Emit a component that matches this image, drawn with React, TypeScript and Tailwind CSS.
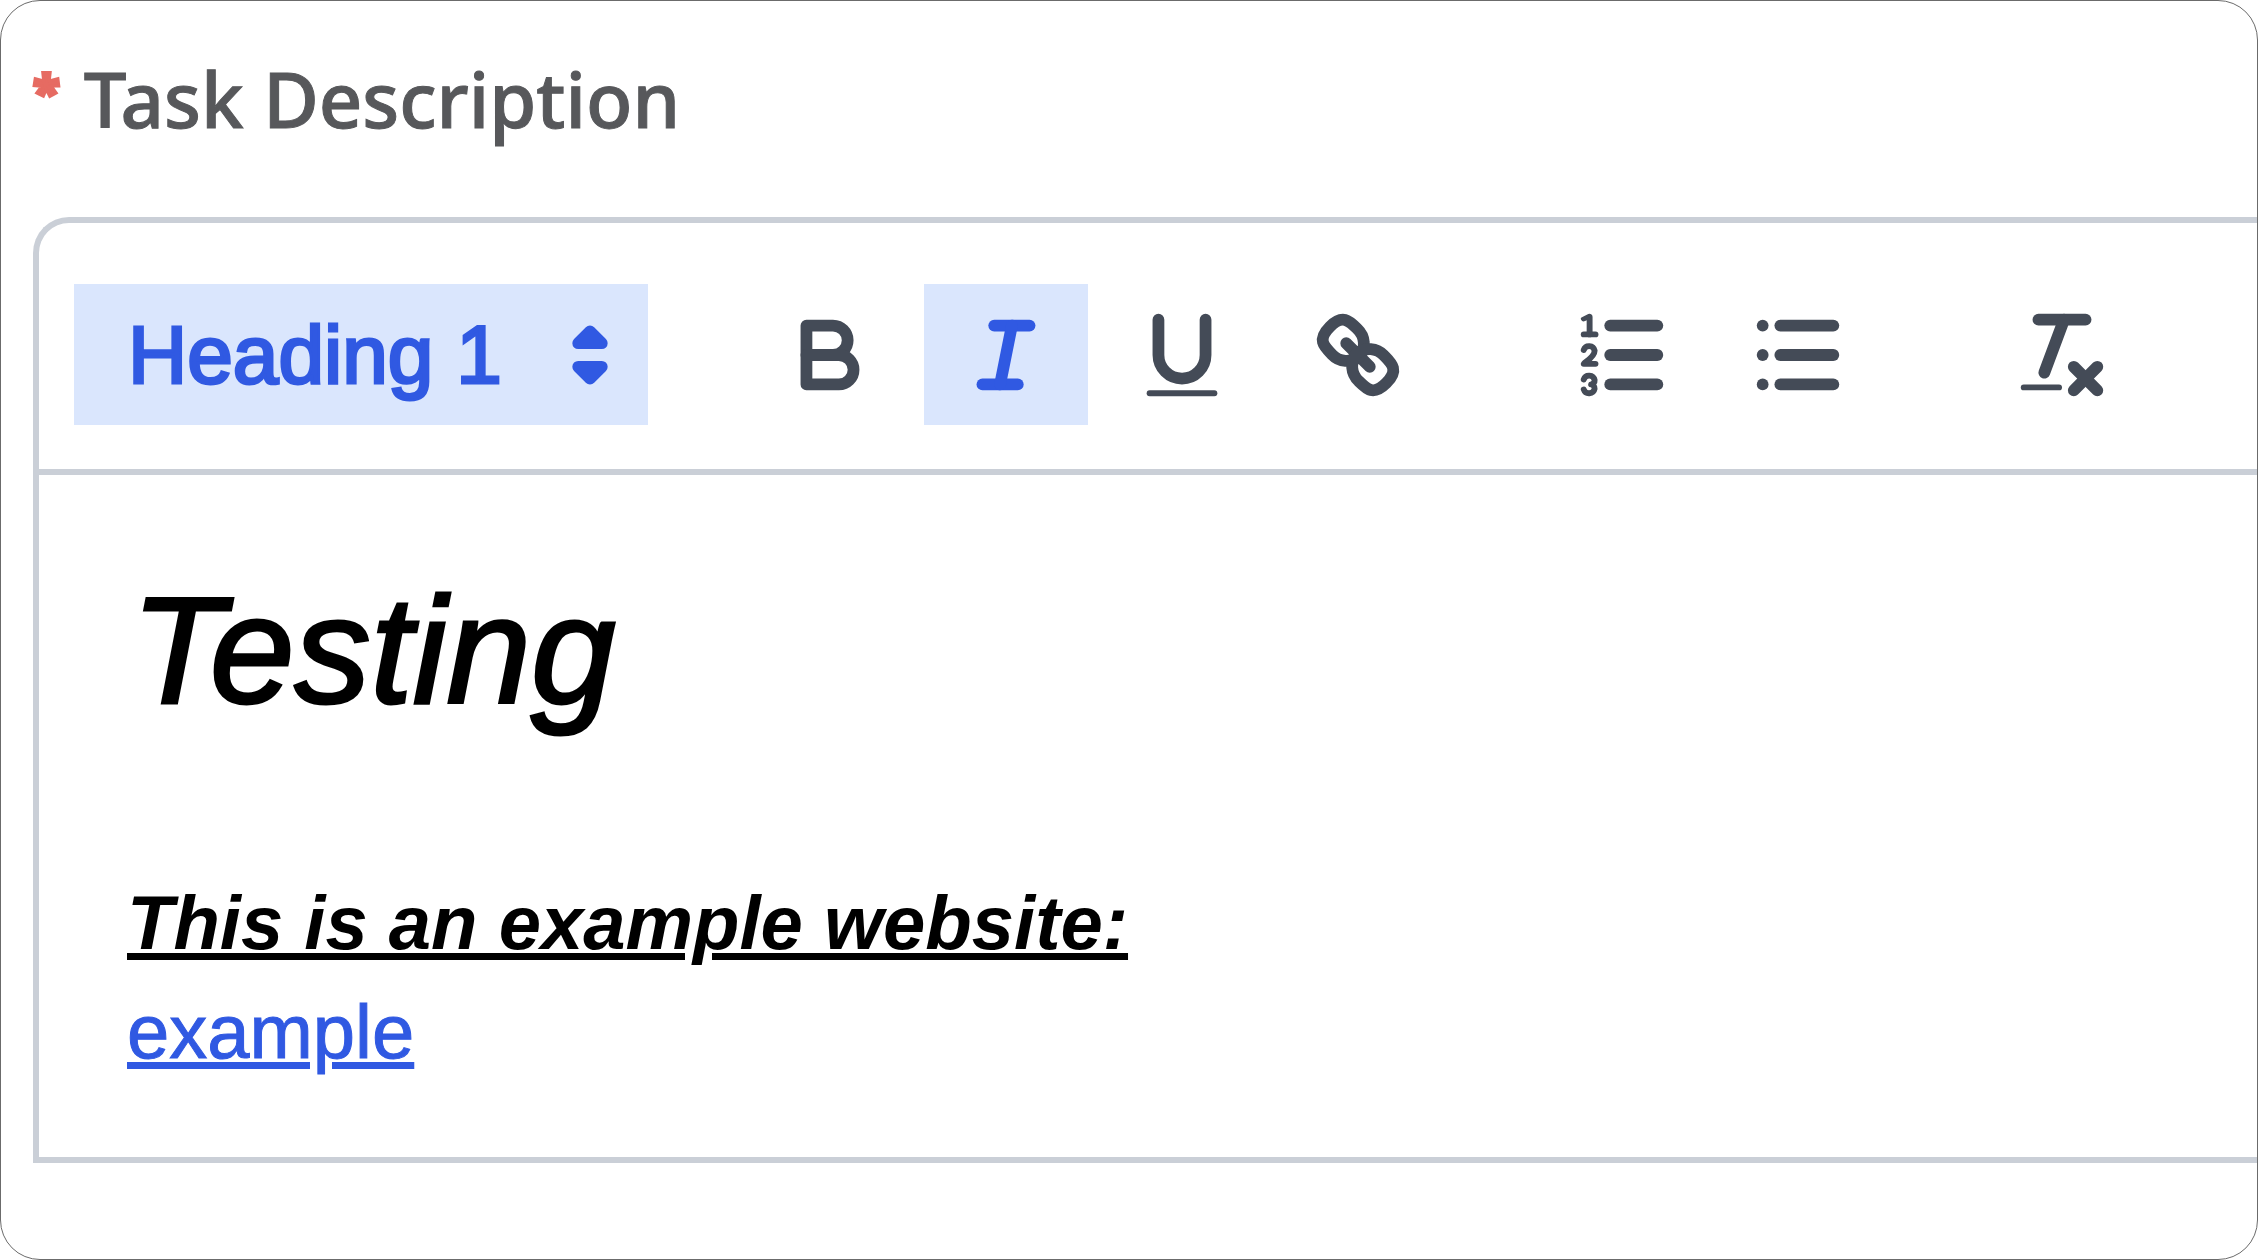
import { useState, type ReactNode } from "react";

function Icon({ children }: { children: ReactNode }) {
  return (
    <svg
      viewBox="0 0 18 18"
      aria-hidden="true"
      className="size-[106px] fill-none stroke-current stroke-2"
      strokeLinecap="round"
      strokeLinejoin="round"
    >
      {children}
    </svg>
  );
}

const groups = [
  [
    {
      name: "Bold",
      icon: (
        <>
          <path d="M5,4H9.5A2.5,2.5,0,0,1,12,6.5v0A2.5,2.5,0,0,1,9.5,9H5A0,0,0,0,1,5,9V4A0,0,0,0,1,5,4Z" />
          <path d="M5,9h5.5A2.5,2.5,0,0,1,13,11.5v0A2.5,2.5,0,0,1,10.5,14H5a0,0,0,0,1,0,0V9A0,0,0,0,1,5,9Z" />
        </>
      ),
    },
    {
      name: "Italic",
      icon: (
        <>
          <line x1="7" x2="13" y1="4" y2="4" />
          <line x1="5" x2="11" y1="14" y2="14" />
          <line x1="8" x2="10" y1="14" y2="4" />
        </>
      ),
    },
    {
      name: "Underline",
      icon: (
        <>
          <path d="M5,3V9a4.012,4.012,0,0,0,4,4H9a4.012,4.012,0,0,0,4-4V3" />
          <rect className="fill-current stroke-none" height="1" width="12" rx="0.5" x="3" y="15" />
        </>
      ),
    },
    {
      name: "Link",
      icon: (
        <>
          <line x1="7" x2="11" y1="7" y2="11" />
          <path d="M8.9,4.577a3.476,3.476,0,0,1,.36,4.679A3.476,3.476,0,0,1,4.577,8.9C3.185,7.5,2.035,6.4,4.217,4.217S7.5,3.185,8.9,4.577Z" />
          <path d="M13.423,9.1a3.476,3.476,0,0,0-4.679-.36,3.476,3.476,0,0,0,.36,4.679c1.392,1.392,2.5,2.542,4.679.36S14.815,10.5,13.423,9.1Z" />
        </>
      ),
    },
  ],
  [
    {
      name: "Ordered list",
      icon: (
        <>
          <line x1="7" x2="15" y1="4" y2="4" />
          <line x1="7" x2="15" y1="9" y2="9" />
          <line x1="7" x2="15" y1="14" y2="14" />
          <line className="stroke-1" x1="2.5" x2="4.5" y1="5.5" y2="5.5" />
          <path
            className="fill-current stroke-none"
            d="M3.5,6A0.5,0.5,0,0,1,3,5.5V3.085l-0.276.138A0.5,0.5,0,0,1,2.053,3c-0.124-.247-0.023-0.324.224-0.447l1-.5A0.5,0.5,0,0,1,4,2.5v3A0.5,0.5,0,0,1,3.5,6Z"
          />
          <path className="stroke-1" d="M4.5,10.5h-2c0-.234,1.85-1.076,1.85-2.234A0.959,0.959,0,0,0,2.5,8.156" />
          <path
            className="stroke-1"
            d="M2.5,14.846a0.959,0.959,0,0,0,1.85-.109A0.7,0.7,0,0,0,3.75,14a0.688,0.688,0,0,0,.6-0.736,0.959,0.959,0,0,0-1.85-.109"
          />
        </>
      ),
    },
    {
      name: "Bullet list",
      icon: (
        <>
          <line x1="6" x2="15" y1="4" y2="4" />
          <line x1="6" x2="15" y1="9" y2="9" />
          <line x1="6" x2="15" y1="14" y2="14" />
          <line x1="3" x2="3" y1="4" y2="4" />
          <line x1="3" x2="3" y1="9" y2="9" />
          <line x1="3" x2="3" y1="14" y2="14" />
        </>
      ),
    },
  ],
  [
    {
      name: "Clear formatting",
      icon: (
        <>
          <line x1="5" x2="13" y1="3" y2="3" />
          <line x1="6" x2="9.35" y1="12" y2="3" />
          <line x1="11" x2="15" y1="11" y2="15" />
          <line x1="15" x2="11" y1="11" y2="15" />
          <rect className="fill-current stroke-none" height="1" width="7" rx="0.5" x="2" y="14" />
        </>
      ),
    },
  ],
];

function HeadingPicker() {
  return (
    <div className="relative shrink-0">
      <select
        aria-label="Text style"
        defaultValue="1"
        className="block h-[141px] w-[574px] appearance-none bg-[#dae6fd] pl-[54px] text-[82px] text-[#3059e2] outline-none [-webkit-text-stroke:3px]"
      >
        <option value="1">Heading 1</option>
        <option value="2">Heading 2</option>
        <option value="0">Normal</option>
      </select>
      <span className="pointer-events-none absolute inset-y-0 right-[5px] flex items-center text-[#3059e2]">
        <Icon>
          <polygon className="fill-current" points="7 11 9 13 11 11" />
          <polygon className="fill-current" points="7 7 9 5 11 7" />
        </Icon>
      </span>
    </div>
  );
}

export default function App() {
  const [active, setActive] = useState("Italic");

  return (
    <main className="min-h-screen overflow-hidden rounded-[40px] border border-[#6b6b6b] bg-white pl-8 font-['Liberation_Sans',Arial,sans-serif]">
      <div
        id="description-label"
        className="flex h-[216px] gap-6 pt-[46px] font-['Noto_Sans',sans-serif] text-[76px] leading-[104px] font-medium text-[#57585b] [-webkit-text-stroke:1px]"
      >
        <span className="text-[50px] leading-[88px] font-black text-[#e66b62] [-webkit-text-stroke:3px]">*</span>
        <span>Task Description</span>
      </div>

      <section className="rounded-tl-[36px] border-y-6 border-l-6 border-[#cacfd7]">
        <div role="toolbar" className="flex gap-[100px] border-b-6 border-[#cacfd7] pt-[61px] pb-11 pl-[35px]">
          <HeadingPicker />
          {groups.map((group, i) => (
            <div key={i} className="flex gap-3">
              {group.map(({ name, icon }) => (
                <button
                  key={name}
                  type="button"
                  aria-label={name}
                  aria-pressed={active === name}
                  onClick={() => setActive(active === name ? "" : name)}
                  className={`flex h-[141px] w-[164px] shrink-0 items-center justify-center ${
                    active === name ? "bg-[#dae6fd] text-[#3059e2]" : "text-[#444b57] hover:text-[#3059e2]"
                  }`}
                >
                  <Icon>{icon}</Icon>
                </button>
              ))}
            </div>
          ))}
        </div>

        <div
          contentEditable
          suppressContentEditableWarning
          role="textbox"
          aria-labelledby="description-label"
          className="px-[88px] pt-[66px] pb-[71px] text-[76px] leading-[109px] text-black outline-none"
        >
          <h1 className="pl-1 text-[152px] leading-[218px] italic [-webkit-text-stroke:3px]">Testing</h1>
          <p>
            <br />
          </p>
          <p>
            <strong className="font-bold italic underline">This is an example website:</strong>
          </p>
          <p>
            <a href="#example" className="text-[#3059e2] underline [-webkit-text-stroke:1px]">
              example
            </a>
          </p>
        </div>
      </section>
    </main>
  );
}
